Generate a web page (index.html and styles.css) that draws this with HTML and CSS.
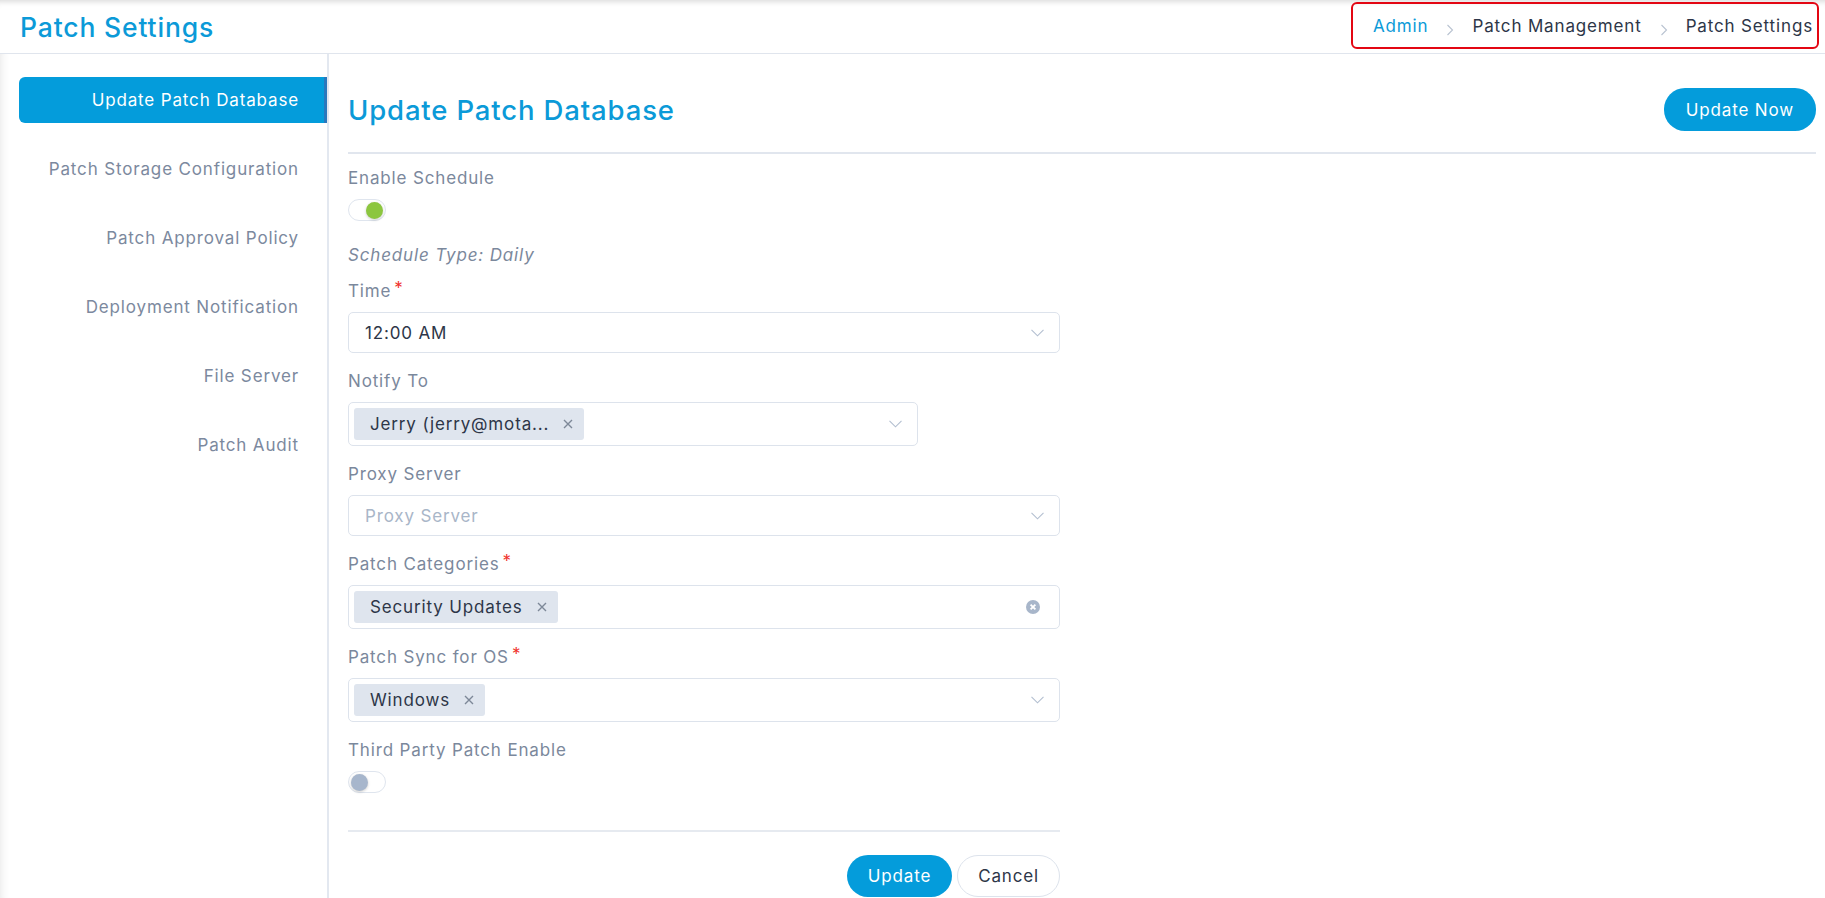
FILE: index.html
```html
<!DOCTYPE html>
<html lang="en">

<head>
    <meta charset="UTF-8">
    <meta name="viewport" content="width=device-width, initial-scale=1.0">
    <title>Patch Settings</title>
    <link rel="stylesheet" href="styles.css">
</head>

<body>
    <!-- top bar -->
    <header class="page-header">
        <h1 class="page-title">Patch Settings</h1>
        <nav class="breadcrumb">
            <a class="crumb crumb-link" href="#">Admin</a>
            <svg class="crumb-sep" width="8" height="12" viewBox="0 0 8 12"><path d="M1.5 1l5 5-5 5" fill="none" stroke="#b9c3d1" stroke-width="1.1"/></svg>
            <span class="crumb">Patch Management</span>
            <svg class="crumb-sep" width="8" height="12" viewBox="0 0 8 12"><path d="M1.5 1l5 5-5 5" fill="none" stroke="#b9c3d1" stroke-width="1.1"/></svg>
            <span class="crumb">Patch Settings</span>
        </nav>
    </header>

    <div class="layout">
        <!-- left menu -->
        <aside class="side-nav">
            <a class="nav-item active" href="#">Update Patch Database</a>
            <a class="nav-item" href="#">Patch Storage Configuration</a>
            <a class="nav-item" href="#">Patch Approval Policy</a>
            <a class="nav-item" href="#">Deployment Notification</a>
            <a class="nav-item" href="#">File Server</a>
            <a class="nav-item" href="#">Patch Audit</a>
        </aside>

        <main class="content">
            <div class="content-head">
                <h2 class="content-title">Update Patch Database</h2>
                <button class="btn btn-primary btn-wide" type="button">Update Now</button>
            </div>

            <form class="settings-form">
                <div class="field field-top">
                    <div class="label">Enable Schedule</div>
                    <div class="switch on"><span class="knob"></span></div>
                </div>

                <div class="schedule-type">Schedule Type: Daily</div>

                <div class="field field-top">
                    <div class="label">Time<span class="req">*</span></div>
                    <div class="select">
                        <span class="select-value">12:00 AM</span>
                        <svg class="chevron" width="13" height="8" viewBox="0 0 13 8"><path d="M0.5 0.8l6 6 6-6" fill="none" stroke="#b3bfd0" stroke-width="1.1"/></svg>
                    </div>
                </div>

                <div class="field">
                    <div class="label">Notify To</div>
                    <div class="select tags select-short">
                        <span class="select-value">
                            <span class="tag">Jerry (jerry@mota...<svg class="tag-x" width="10" height="10" viewBox="0 0 10 10"><path d="M1 1l8 8M9 1l-8 8" stroke="#7d8898" stroke-width="1.4"/></svg></span>
                        </span>
                        <svg class="chevron" width="13" height="8" viewBox="0 0 13 8"><path d="M0.5 0.8l6 6 6-6" fill="none" stroke="#b3bfd0" stroke-width="1.1"/></svg>
                    </div>
                </div>

                <div class="field">
                    <div class="label">Proxy Server</div>
                    <div class="select">
                        <span class="select-value placeholder">Proxy Server</span>
                        <svg class="chevron" width="13" height="8" viewBox="0 0 13 8"><path d="M0.5 0.8l6 6 6-6" fill="none" stroke="#b3bfd0" stroke-width="1.1"/></svg>
                    </div>
                </div>

                <div class="field">
                    <div class="label">Patch Categories<span class="req">*</span></div>
                    <div class="select tags">
                        <span class="select-value">
                            <span class="tag">Security Updates<svg class="tag-x" width="10" height="10" viewBox="0 0 10 10"><path d="M1 1l8 8M9 1l-8 8" stroke="#7d8898" stroke-width="1.4"/></svg></span>
                        </span>
                        <svg class="clear" width="14" height="14" viewBox="0 0 14 14"><circle cx="7" cy="7" r="7" fill="#a8b6ca"/><path d="M4.6 4.6l4.8 4.8M9.4 4.6l-4.8 4.8" stroke="#fff" stroke-width="1.8"/></svg>
                    </div>
                </div>

                <div class="field">
                    <div class="label">Patch Sync for OS<span class="req">*</span></div>
                    <div class="select tags">
                        <span class="select-value">
                            <span class="tag">Windows<svg class="tag-x" width="10" height="10" viewBox="0 0 10 10"><path d="M1 1l8 8M9 1l-8 8" stroke="#7d8898" stroke-width="1.4"/></svg></span>
                        </span>
                        <svg class="chevron" width="13" height="8" viewBox="0 0 13 8"><path d="M0.5 0.8l6 6 6-6" fill="none" stroke="#b3bfd0" stroke-width="1.1"/></svg>
                    </div>
                </div>

                <div class="field">
                    <div class="label">Third Party Patch Enable</div>
                    <div class="switch"><span class="knob"></span></div>
                </div>

                <div class="form-actions">
                    <button class="btn btn-primary" type="button">Update</button>
                    <button class="btn btn-light" type="button">Cancel</button>
                </div>
            </form>
        </main>
    </div>
</body>

</html>
```

FILE: styles.css
```css
* {
    box-sizing: border-box;
}

body {
    margin: 0;
    font-family: Inter, "Noto Sans", sans-serif;
    font-size: 17px;
    letter-spacing: 0.05em;
    color: #2d3648;
    background: #fff;
}

a {
    text-decoration: none;
}

/* top bar */
.page-header {
    height: 54px;
    display: flex;
    justify-content: space-between;
    align-items: flex-start;
    padding: 0 6px 0 20px;
    border-bottom: 1px solid #e0e5ed;
    box-shadow: inset 0 7px 6px -6px rgba(0, 0, 0, 0.18);
}

.page-title {
    margin: 0;
    line-height: 54px;
    font-size: 26.5px;
    font-weight: 500;
    color: #0b9ad8;
}

.breadcrumb {
    margin-top: 2px;
    height: 47px;
    display: flex;
    align-items: center;
    padding: 0 4px 0 20px;
    border: 2px solid #e30613;
    border-radius: 6px;
}

.crumb {
    color: #2d3648;
}

.crumb-link {
    color: #0b9ad8;
}

.crumb-sep {
    margin: 8px 18px 0;
}

/* page body */
.layout {
    display: flex;
    min-height: calc(100vh - 54px);
    box-shadow: inset 10px 0 10px -9px rgba(0, 0, 0, 0.1);
}

.side-nav {
    width: 310px;
    margin-left: 19px;
    padding-top: 23px;
    border-right: 2px solid #e3e8f0;
    display: flex;
    flex-direction: column;
    gap: 23px;
}

.nav-item {
    height: 46px;
    display: flex;
    align-items: center;
    justify-content: flex-end;
    padding-right: 28px;
    color: #7c899e;
    border-radius: 6px 0 0 6px;
}

.nav-item.active {
    background: #049cdb;
    color: #fff;
    box-shadow: inset -3px 0 0 #2a78bd;
}

.content {
    flex: 1;
    padding: 34px 9px 0 19px;
}

.content-head {
    display: flex;
    justify-content: space-between;
    align-items: center;
    padding-bottom: 21px;
    border-bottom: 2px solid #e1e6ee;
}

.content-title {
    margin: 0;
    font-size: 27.5px;
    font-weight: 500;
    color: #0b9ad8;
}

/* form */
.settings-form {
    width: 712px;
}

.field {
    margin-top: 16px;
}

.field-top {
    margin-top: 12px;
}

.label {
    line-height: 24px;
    margin-bottom: 9px;
    color: #7b889c;
}

.req {
    color: #f0322c;
    margin-left: 3px;
    line-height: 1;
    vertical-align: top;
    position: relative;
    top: 1px;
}

.schedule-type {
    margin-top: 22px;
    line-height: 24px;
    font-style: italic;
    color: #7b889c;
}

.switch {
    width: 38px;
    height: 22px;
    display: flex;
    align-items: center;
    padding: 0 2px;
    border: 1px solid #dfe5ee;
    border-radius: 11px;
    background: #fff;
}

.switch .knob {
    width: 17px;
    height: 17px;
    border-radius: 50%;
    background: #a7b6cc;
    box-shadow: 0 1px 3px rgba(0, 0, 0, 0.2);
}

.switch.on {
    justify-content: flex-end;
}

.switch.on .knob {
    background: #8cc63f;
}

.select {
    height: 41px;
    display: flex;
    align-items: center;
    padding: 0 15px 0 16px;
    border: 1px solid #dde3ec;
    border-radius: 5px;
}

.select.tags {
    height: 44px;
    padding-left: 5px;
}

.select-short {
    width: 570px;
}

.select-value {
    flex: 1;
    color: #2d3648;
}

.select-value.placeholder {
    color: #a9b6c8;
}

.tag {
    height: 32px;
    display: inline-flex;
    align-items: center;
    gap: 14px;
    padding: 0 11px 0 16px;
    background: #dfe5ee;
    border-radius: 3px;
    color: #2d3648;
}

.clear {
    margin-right: 4px;
}

.form-actions {
    margin-top: 37px;
    padding-top: 23px;
    border-top: 2px solid #e6eaf0;
    display: flex;
    justify-content: flex-end;
    gap: 5px;
}

.btn {
    height: 42px;
    padding: 0 20px;
    border-radius: 21px;
    border: 1px solid transparent;
    font-family: inherit;
    font-size: 17px;
    letter-spacing: inherit;
    cursor: pointer;
}

.btn-primary {
    background: #049cdb;
    color: #fff;
}

.btn-wide {
    height: 43px;
    padding: 0 21px;
}

.btn-light {
    background: #fff;
    border-color: #dde3ec;
    color: #2d3648;
}
```
